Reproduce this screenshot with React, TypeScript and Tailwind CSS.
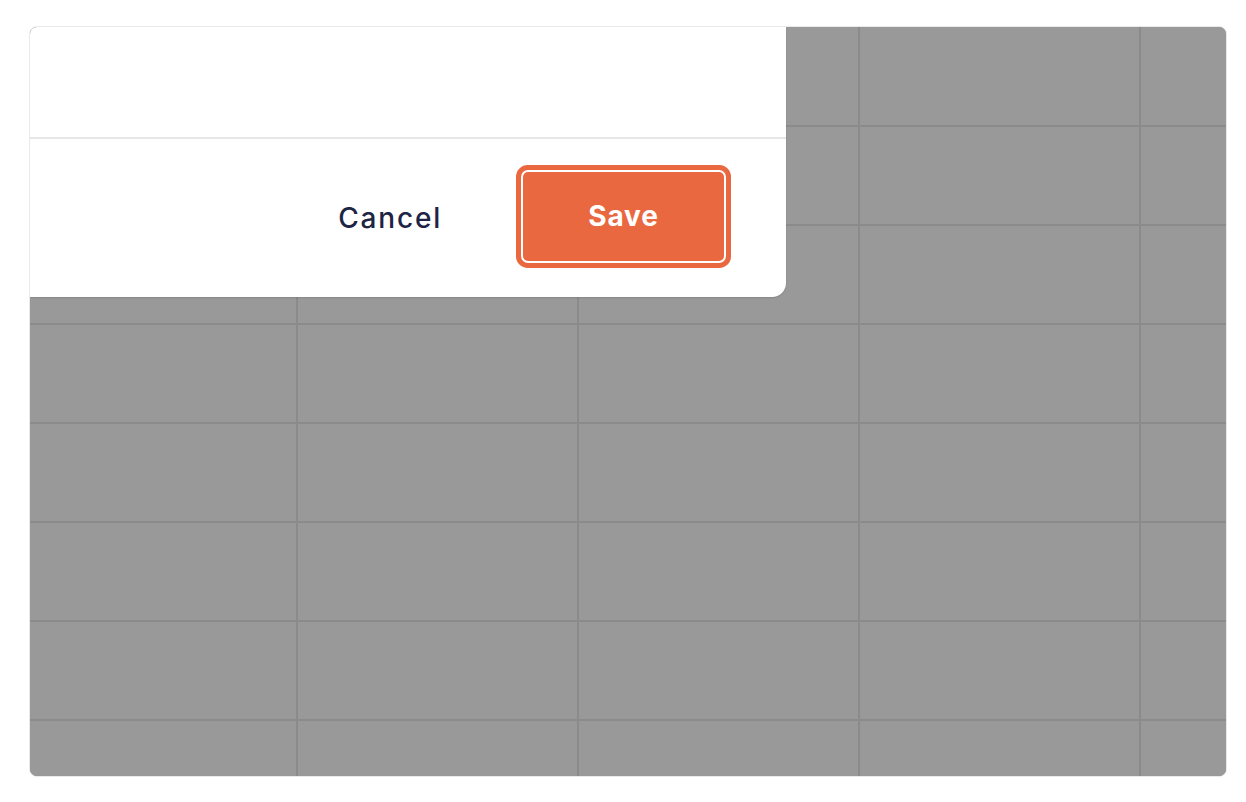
import React from 'react'

const colWidths = ['w-[266px]', 'w-[279px]', 'w-[279px]', 'w-[279px]', 'flex-1']
const rowHeights = ['h-[98px]', 'h-[97px]', 'h-[97px]', 'h-[97px]', 'h-[97px]', 'h-[97px]', 'h-[97px]', 'flex-1']

function Grid() {
  return (
    <div className="flex h-full w-full flex-col gap-[2px] bg-[#8b8b8b]">
      {rowHeights.map((h, r) => (
        <div key={r} className={`flex gap-[2px] ${h}`}>
          {colWidths.map((w, c) => (
            <div key={c} className={`${w} shrink-0 bg-[#999999]`} />
          ))}
        </div>
      ))}
    </div>
  )
}

function Dialog() {
  return (
    <div className="absolute left-0 top-0 flex h-[270px] w-[756px] flex-col rounded-br-[14px] bg-white shadow-[0_1px_2px_rgba(0,0,0,0.12)]">
      <div className="h-[112px] border-b-2 border-[#e6e6e6]" />
      <div className="flex flex-1 items-center justify-end pr-[62px] pb-[4px]">
        <button className="mr-[81px] mt-[3px] text-[28px] font-medium tracking-[1.8px] text-[#1d2444]">
          Cancel
        </button>
        <button className="h-[89px] w-[201px] rounded-[5px] bg-[#e9683f] text-[28px] font-bold tracking-[0.8px] text-white shadow-[0_0_0_2px_#ffffff,0_0_0_7px_#e9683f]">
          Save
        </button>
      </div>
    </div>
  )
}

export default function App() {
  return (
    <div
      className="h-[802px] w-[1246px] bg-white pl-[29px] pt-[26px]"
      style={{ fontFamily: 'Inter, "Open Sans", sans-serif' }}
    >
      <div className="relative h-[751px] w-[1198px] overflow-hidden rounded-lg border border-[#e9e9ec]">
        <Grid />
        <Dialog />
      </div>
    </div>
  )
}
